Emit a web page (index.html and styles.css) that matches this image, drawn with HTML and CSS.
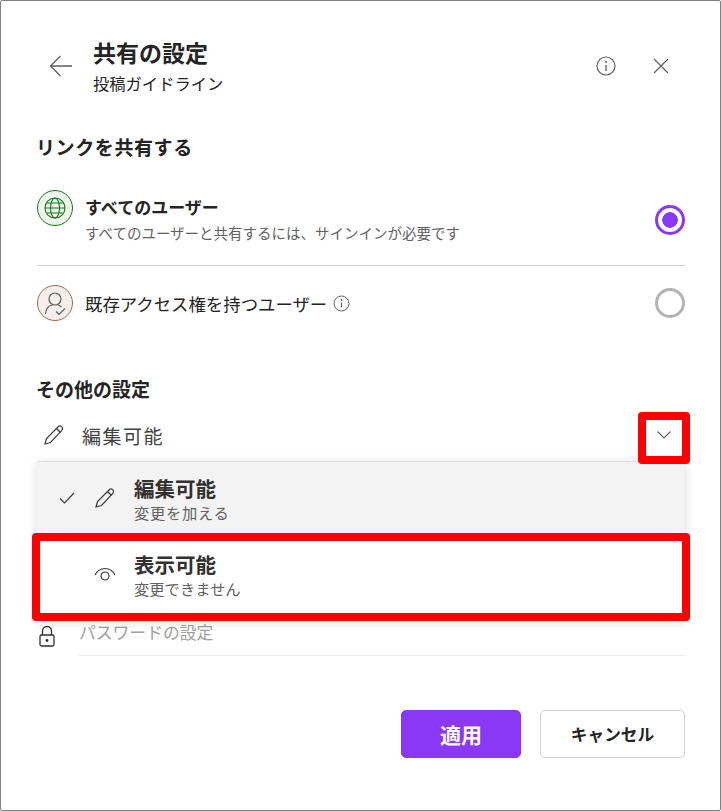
FILE: index.html
```html
<!DOCTYPE html>
<html lang="ja">
<head>
    <meta charset="UTF-8">
    <title>共有の設定</title>
    <link rel="stylesheet" href="styles.css">
</head>
<body>
<main class="dialog">
    <header class="head">
        <svg class="back" width="24" height="24" viewBox="0 0 24 24"><path d="M23 12H2M11.500 2 1.500 12l10 10" fill="none" stroke="#605e5c" stroke-width="1.300"/></svg>
        <div class="head-text">
            <h1>共有の設定</h1>
            <p>投稿ガイドライン</p>
        </div>
        <svg class="head-info" width="20" height="20" viewBox="0 0 20 20"><circle cx="10" cy="10" r="9" fill="none" stroke="#605e5c" stroke-width="1.200"/><circle cx="10" cy="6" r="1" fill="#605e5c"/><path d="M10 9v6" stroke="#605e5c" stroke-width="1.300"/></svg>
        <svg class="head-close" width="16" height="16" viewBox="0 0 16 16"><path d="M1 1l14 14M15 1 1 15" stroke="#605e5c" stroke-width="1.200"/></svg>
    </header>

    <h2 class="section first">リンクを共有する</h2>
    <div class="option option-all">
        <span class="badge badge-green">
            <svg width="24" height="24" viewBox="0 0 24 24" fill="none" stroke="#107c10" stroke-width="1.100"><circle cx="12" cy="12" r="10"/><ellipse cx="12" cy="12" rx="4.500" ry="10"/><path d="M2 12h20M3.500 7h17M3.500 17h17"/></svg>
        </span>
        <div class="option-text">
            <div class="option-title">すべてのユーザー</div>
            <div class="option-desc">すべてのユーザーと共有するには、サインインが必要です</div>
        </div>
        <span class="radio radio-on"></span>
    </div>
    <div class="option option-existing">
        <span class="badge badge-brown">
            <svg width="26" height="26" viewBox="0 0 26 26" fill="none" stroke="#605e5c" stroke-width="1.200"><circle cx="13" cy="9" r="6"/><path d="M3.500 24c0-5 3-8.500 7-9M16 15c1.300.3 2.500 1 3.500 2M14 21.500l3 3 6-6"/></svg>
        </span>
        <span class="option-name">既存アクセス権を持つユーザー</span>
        <svg class="small-info" width="17" height="17" viewBox="0 0 17 17"><circle cx="8.500" cy="8.500" r="7.500" fill="none" stroke="#605e5c"/><circle cx="8.500" cy="5" r=".9" fill="#605e5c"/><path d="M8.500 7.500v5" stroke="#605e5c" stroke-width="1.200"/></svg>
        <span class="radio"></span>
    </div>

    <h2 class="section second">その他の設定</h2>
    <div class="perm">
        <svg class="pen" width="22" height="22" viewBox="0 0 22 22" fill="none" stroke="#3b3a39" stroke-width="1.200"><path d="M2 20l1.500-5.500L15 3c1.200-1.200 2.800-1.200 3.800-.2s1 2.600-.2 3.800L7.500 18.500z"/><path d="M13.500 4.500l4 4"/></svg>
        <span class="perm-name">編集可能</span>
        <svg class="chevron" width="14" height="8" viewBox="0 0 14 8"><path d="M.5.5 7 7 13.500.5" fill="none" stroke="#605e5c" stroke-width="1.100"/></svg>
        <span class="mark mark-chevron"></span>

        <div class="menu">
            <div class="menu-item selected">
                <svg class="check" width="16" height="12" viewBox="0 0 16 12"><path d="M1 6.500 5.500 11 15 1" fill="none" stroke="#3b3a39" stroke-width="1.200"/></svg>
                <svg class="menu-icon" width="22" height="22" viewBox="0 0 22 22" fill="none" stroke="#3b3a39" stroke-width="1.200"><path d="M2 20l1.500-5.500L15 3c1.200-1.200 2.800-1.200 3.800-.2s1 2.600-.2 3.800L7.500 18.500z"/><path d="M13.500 4.500l4 4"/></svg>
                <div>
                    <div class="menu-title">編集可能</div>
                    <div class="menu-desc menu-desc-wide">変更を加える</div>
                </div>
            </div>
            <div class="menu-item last">
                <span class="check"></span>
                <svg class="menu-icon" width="22" height="14" viewBox="0 0 22 14" fill="none" stroke="#3b3a39" stroke-width="1.200"><path d="M1 8c2-4 5.500-6.500 10-6.500S19 4 21 8"/><circle cx="11" cy="9" r="4"/></svg>
                <div>
                    <div class="menu-title">表示可能</div>
                    <div class="menu-desc">変更できません</div>
                </div>
            </div>
            <span class="mark mark-item"></span>
        </div>
    </div>

    <div class="password">
        <svg width="18" height="23" viewBox="0 0 18 23" fill="none" stroke="#323130" stroke-width="1.300"><path d="M4.500 10V6a4.500 4.500 0 0 1 9 0v4"/><rect x="2" y="10" width="14" height="11" rx="1.500"/><circle cx="9" cy="15.500" r=".8" fill="#323130"/></svg>
        <span class="password-name">パスワードの設定</span>
    </div>

    <footer class="actions">
        <button class="btn btn-primary">適用</button>
        <button class="btn btn-cancel">キャンセル</button>
    </footer>
</main>
</body>
</html>
```

FILE: styles.css
```css
html, body{
    height: 100%;
}

body{
    margin: 0;
    background: #fff;
    color: #242424;
    font: 16px "Noto Sans CJK JP", "Liberation Sans", sans-serif;
}

.dialog{
    box-sizing: border-box;
    width: 721px;
    height: 811px;
    padding: 0 35px 0 36px;
    display: flex;
    flex-direction: column;
    background: #fff;
    border: 1px solid #808080;
    border-radius: 2px;
}

/* header */
.head{
    display: flex;
    align-items: flex-start;
    padding-top: 36px;
}
.back{
    margin: 17px 0 0 12px;
}
.head-text{
    flex: 1;
    margin-left: 20px;
}
.head-text h1{
    margin: 0;
    font-size: 23px;
    line-height: 30px;
    font-weight: 700;
}
.head-text p{
    margin: 1px 0 0;
    font-size: 16.300px;
    line-height: 30px;
}
.head-info{
    margin: 19px 0 0 0;
}
.head-close{
    margin: 21px 16px 0 37px;
}

.section{
    margin: 0 0 0 -1px;
    font-size: 19px;
    line-height: 26px;
    font-weight: 700;
}
.section.first{
    margin-top: 36px;
    letter-spacing: .6px;
}
.section.second{
    margin-top: 36px;
}

/* link options */
.option{
    display: flex;
    align-items: center;
}
.option-all{
    height: 91px;
    margin-top: 14px;
    border-bottom: 1px solid #d1d1d1;
}
.option-all .badge{
    align-self: flex-start;
    margin-top: 16px;
}
.option-existing{
    height: 74px;
}
.badge{
    box-sizing: border-box;
    flex: none;
    width: 36px;
    height: 36px;
    border-radius: 50%;
    display: flex;
    align-items: center;
    justify-content: center;
    margin-right: 12px;
}
.badge-green{
    background: #f1f5ef;
    border: 1px solid #107c10;
}
.badge-brown{
    background: #f5efeb;
    border: 1px solid #a5683f;
}
.option-text{
    flex: 1;
}
.option-title{
    font-size: 17px;
    line-height: 26px;
    font-weight: 700;
}
.option-desc{
    font-size: 14.500px;
    line-height: 26px;
    color: #616161;
}
.option-name{
    font-size: 17.400px;
}
.small-info{
    margin-left: 6px;
    margin-right: auto;
}
.radio{
    box-sizing: border-box;
    flex: none;
    width: 30px;
    height: 30px;
    border: 3px solid #b3b3b3;
    border-radius: 50%;
}
.radio-on{
    border-color: #8a38f5;
    background: radial-gradient(circle, #8a38f5 0 7.500px, #fff 8px);
}

/* permission row */
.perm{
    position: relative;
    display: flex;
    align-items: center;
    height: 46px;
    margin-top: 10px;
}
.pen{
    margin-left: 6px;
}
.perm-name{
    margin-left: 17px;
    font-size: 19px;
    letter-spacing: 1.500px;
    color: #424242;
}
.chevron{
    margin-left: auto;
    margin-right: 14px;
}
.mark{
    position: absolute;
    box-sizing: border-box;
    border: 8px solid #f00;
    border-radius: 4px;
    z-index: 2;
}
.mark-chevron{
    right: -5px;
    top: 0;
    width: 52px;
    height: 52px;
}

.menu{
    position: absolute;
    left: 0;
    right: 0;
    top: 49px;
    z-index: 1;
    background: #fff;
    border-top: 1px solid #e0e0e0;
    box-shadow: 0 2px 10px rgba(0, 0, 0, .14);
}
.menu-item{
    display: flex;
    align-items: center;
    height: 72px;
}
.menu-item.selected{
    background: #f3f3f3;
}
.menu-item.last{
    box-sizing: border-box;
    height: 86px;
    padding-bottom: 6px;
}
.check{
    flex: none;
    width: 16px;
    margin-left: 22px;
}
.menu-icon{
    flex: none;
    margin-left: 19px;
    margin-right: 18px;
}
.menu-title{
    font-size: 20.500px;
    line-height: 27px;
    font-weight: 700;
    color: #323130;
}
.menu-desc{
    font-size: 15.300px;
    line-height: 20px;
    color: #616161;
}
.menu-desc-wide{
    letter-spacing: .7px;
}
.mark-item{
    left: -5px;
    right: -5px;
    top: 71px;
    height: 88px;
}

/* password */
.password{
    display: flex;
    align-items: center;
    margin-top: 151px;
}
.password svg{
    margin: 8px 0 0 1px;
}
.password-name{
    flex: 1;
    margin-left: 23px;
    height: 46px;
    line-height: 46px;
    font-size: 16.800px;
    color: #a19f9d;
    border-bottom: 1px solid #edebe9;
}

/* buttons */
.actions{
    display: flex;
    justify-content: flex-end;
    gap: 19px;
    margin-top: auto;
    margin-bottom: 52px;
}
.btn{
    box-sizing: border-box;
    width: 145px;
    height: 48px;
    padding: 0;
    background: #fff;
    color: #242424;
    font: 700 16.700px "Noto Sans CJK JP", "Liberation Sans", sans-serif;
    border: 1px solid #d1d1d1;
    border-radius: 5px;
}
.btn-primary{
    width: 120px;
    background: #8a38f5;
    border-color: #8a38f5;
    color: #fff;
    font-size: 21px;
}
```
